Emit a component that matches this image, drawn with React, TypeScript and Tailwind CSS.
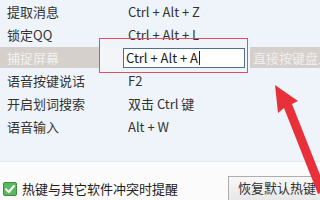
import React from "react";

const font = { fontFamily: '"Noto Sans CJK SC", "Noto Sans", sans-serif' };

function Row({ label, value }: { label: string; value: string }) {
  return (
    <div className="flex items-center h-[23px] text-[13px] text-[#333]">
      <div className="w-[128px] pl-[7px] whitespace-nowrap">{label}</div>
      <div className="whitespace-nowrap">{value}</div>
    </div>
  );
}

export default function App() {
  return (
    <div className="relative w-[320px] h-[200px] overflow-hidden bg-[#fbfbfb]" style={font}>
      <div className="h-[162px] bg-[#eef4fa] border-b border-[#e2e8ee]">
        <Row label="提取消息" value="Ctrl + Alt + Z" />
        <Row label="锁定QQ" value="Ctrl + Alt + L" />
        <div className="flex items-center h-[23px] text-[13px]">
          <div className="w-[99px] h-[21px] bg-[#d6d0cc] pl-[7px] flex items-center text-[#f2f0ee] whitespace-nowrap">
            捕捉屏幕
          </div>
          <div className="w-[24px] h-[21px] bg-[#f3f5f8]" />
          <div className="w-[122px] h-[20px] border border-[#4f6f8f] bg-white flex items-center pl-[2px] text-[#222] whitespace-nowrap">
            Ctrl + Alt + A
            <span className="inline-block w-px h-[14px] bg-[#222] ml-px" />
          </div>
          <div className="w-[5px] h-[21px] bg-[#f3f5f8]" />
          <div className="flex-1 h-[21px] bg-[#d6d0cc] pl-[3px] flex items-center text-[#f0eeec] whitespace-nowrap overflow-hidden">
            直接按键盘上的组合键
          </div>
        </div>
        <Row label="语音按键说话" value="F2" />
        <Row label="开启划词搜索" value="双击 Ctrl 键" />
        <Row label="语音输入" value="Alt + W" />
      </div>

      <div className="flex items-center mt-[15px] h-[23px]">
        <div className="flex items-center pl-[3px] gap-[5px] text-[13px] text-[#222] whitespace-nowrap">
          <svg width="14" height="14" viewBox="0 0 14 14">
            <rect x="0.5" y="0.5" width="13" height="13" rx="1.5" fill="#5cb85c" stroke="#3d8b3d" />
            <path d="M3 7.2 L5.8 10 L11 4" fill="none" stroke="#fff" strokeWidth="2" strokeLinecap="round" strokeLinejoin="round" />
          </svg>
          热键与其它软件冲突时提醒
        </div>
        <div className="ml-auto -mr-[10px] h-[25px] -mt-[1px] w-[102px] border border-[#adadad] bg-gradient-to-b from-[#f8f8f8] to-[#e8e8e8] flex items-center pl-[9px] text-[13px] text-[#333] whitespace-nowrap">
          恢复默认热键
        </div>
      </div>

      <div className="absolute left-[99px] top-[38px] w-[149px] h-[35px] border-[1.5px] border-[#e0505e] pointer-events-none" />

      <svg className="absolute left-0 top-0 pointer-events-none" width="320" height="200" viewBox="0 0 320 200">
        <polygon points="275,85 298,101 292,104 326,190 318,194 284,108 278,113" fill="#e8303a" />
      </svg>
    </div>
  );
}
